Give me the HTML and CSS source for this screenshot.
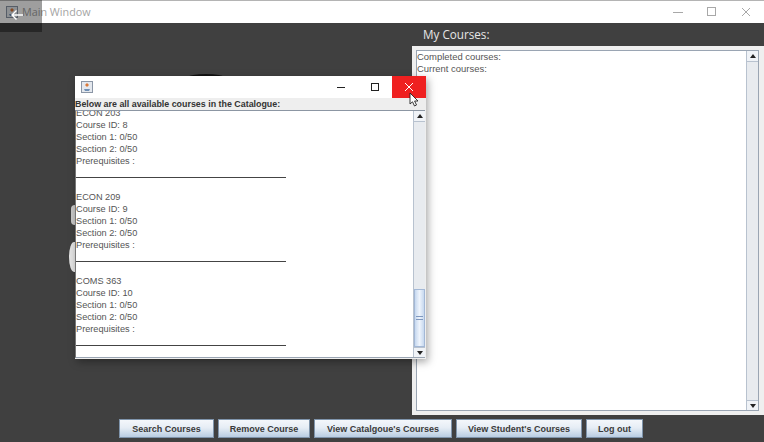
FILE: index.html
```html
<!DOCTYPE html>
<html>
<head>
    <meta charset="UTF-8">
    <title>Main Window</title>
    <link rel="stylesheet" href="styles.css">
</head>
<body>
    <div class="main-window">
        <div class="titlebar">
            <svg class="app-icon" viewBox="0 0 12 12"><rect x="0.5" y="0.5" width="11" height="11" fill="#e4e8ee" stroke="#8b96a6"/><path d="M6 2 L8 4 L6 6 L4 4 Z" fill="#d9793a"/><path d="M3 8 H9 L8 10 H4 Z" fill="#6f8fb5"/></svg>
            <span class="title-text">Main Window</span>
            <div class="win-controls">
                <svg viewBox="0 0 10 10"><path d="M0 5.5 H10" stroke="#a8a8a8"/></svg>
                <svg viewBox="0 0 10 10"><rect x="0.5" y="0.5" width="8" height="8" fill="none" stroke="#a8a8a8"/></svg>
                <svg viewBox="0 0 10 10"><path d="M1 1 L9 9 M9 1 L1 9" stroke="#a8a8a8"/></svg>
            </div>
        </div>
        <div class="content">
            <div class="courses-col">
                <div class="courses-title">My Courses:</div>
                <div class="courses-panel">
                    <div class="courses-box">
                        <div class="courses-text">
                            <div>Completed courses:</div>
                            <div>Current courses:</div>
                        </div>
                        <div class="scrollbar">
                            <div class="arrow-btn"><span class="arrow-up"></span></div>
                            <div class="track"></div>
                            <div class="arrow-btn"><span class="arrow-down"></span></div>
                        </div>
                    </div>
                </div>
            </div>
            <div class="button-row">
                <button class="btn search">Search Courses</button>
                <button class="btn remove">Remove Course</button>
                <button class="btn catalogue">View Catalgoue's Courses</button>
                <button class="btn student">View Student's Courses</button>
                <button class="btn logout">Log out</button>
            </div>
        </div>
    </div>

    <!-- lo que asoma detras del dialogo -->
    <div class="blob blob-top"></div>
    <div class="blob blob-left1"></div>
    <div class="blob blob-left2"></div>

    <div class="dialog">
        <div class="dialog-title">
            <svg class="app-icon" viewBox="0 0 12 12"><rect x="0.5" y="0.5" width="11" height="11" fill="#e4e8ee" stroke="#8b96a6"/><path d="M6 2 L8 4 L6 6 L4 4 Z" fill="#d9793a"/><path d="M3 8 H9 L8 10 H4 Z" fill="#6f8fb5"/></svg>
            <div class="dialog-controls">
                <div class="ctl"><svg viewBox="0 0 10 10"><path d="M1 5.5 H9" stroke="#222"/></svg></div>
                <div class="ctl"><svg viewBox="0 0 10 10"><rect x="1.5" y="1.5" width="7" height="7" fill="none" stroke="#222"/></svg></div>
                <div class="ctl close"><svg viewBox="0 0 10 10"><path d="M1 1 L9 9 M9 1 L1 9" stroke="#fff"/></svg></div>
            </div>
        </div>
        <div class="dialog-label">Below are all available courses in the Catalogue:</div>
        <div class="dialog-body">
            <div class="catalogue-list">
                <div class="course">
                    <div>ECON 203</div>
                    <div>Course ID: 8</div>
                    <div>Section 1: 0/50</div>
                    <div>Section 2: 0/50</div>
                    <div>Prerequisites :</div>
                    <div class="rule"></div>
                </div>
                <div class="course">
                    <div>ECON 209</div>
                    <div>Course ID: 9</div>
                    <div>Section 1: 0/50</div>
                    <div>Section 2: 0/50</div>
                    <div>Prerequisites :</div>
                    <div class="rule"></div>
                </div>
                <div class="course">
                    <div>COMS 363</div>
                    <div>Course ID: 10</div>
                    <div>Section 1: 0/50</div>
                    <div>Section 2: 0/50</div>
                    <div>Prerequisites :</div>
                    <div class="rule"></div>
                </div>
            </div>
            <div class="scrollbar">
                <div class="arrow-btn"><span class="arrow-up"></span></div>
                <div class="track">
                    <div class="thumb"><span class="grip"></span></div>
                </div>
                <div class="arrow-btn"><span class="arrow-down"></span></div>
            </div>
        </div>
    </div>

    <svg class="cursor" viewBox="0 0 11 15"><path d="M1 1 V12 L3.5 9.8 L5.5 14 L7.5 13 L5.6 9 H9 Z" fill="#fff" stroke="#222" stroke-width="0.9"/></svg>

    <div class="back-overlay">
        <svg viewBox="0 0 14 12"><path d="M13 6 H2 M6.5 1.5 L2 6 L6.5 10.5" fill="none" stroke="#fff" stroke-width="1.4"/></svg>
    </div>
</body>
</html>
```

FILE: styles.css
```css
html, body {
    margin: 0;
    height: 100%;
}

body {
    position: relative;
    width: 764px;
    height: 442px;
    overflow: hidden;
    font-family: "Liberation Sans", Arial, sans-serif;
    background-color: #404040;
}

.main-window {
    display: flex;
    flex-direction: column;
    height: 100%;
}

.titlebar {
    display: flex;
    align-items: center;
    height: 22px;
    padding-left: 6px;
    background-color: #fff;
    border-top: 1px solid #b4b4b4;
}

.app-icon {
    width: 12px;
    height: 12px;
    flex-shrink: 0;
}

.title-text {
    margin-left: 4px;
    margin-bottom: 2px;
    font-family: "Open Sans", sans-serif;
    font-size: 10.8px;
    color: #a4a4a4;
}

.win-controls {
    display: flex;
    gap: 24px;
    margin-left: auto;
    margin-right: 13px;
}

.win-controls svg {
    width: 10px;
    height: 10px;
}

.content {
    flex: 1;
    display: flex;
    flex-direction: column;
}

.courses-col {
    margin-left: 412px;
}

.courses-title {
    height: 23px;
    padding-left: 11px;
    line-height: 23px;
    font-family: "Open Sans", sans-serif;
    font-size: 11.7px;
    color: #e6e6e6;
}

.courses-panel {
    height: 369px;
    padding: 4px 5px 4px 4px;
    box-sizing: border-box;
    background-color: #efefef;
}

.courses-box {
    display: flex;
    height: 100%;
    background-color: #fff;
    border: 1px solid #9aa5b3;
    box-sizing: border-box;
}

.courses-text {
    flex: 1;
    font-size: 9.45px;
    line-height: 12px;
    color: #555;
}

.button-row {
    display: flex;
    gap: 4px;
    margin-top: 4px;
    padding-left: 119px;
}

.btn {
    height: 19px;
    padding: 0;
    font-family: "Liberation Sans", Arial, sans-serif;
    font-size: 9px;
    font-weight: bold;
    color: #3a3a3a;
    background: linear-gradient(#f4f7fb, #e6edf5 45%, #b9cde2);
    border: 1px solid #7f94ab;
}

.search { width: 95px; }
.remove { width: 92px; }
.catalogue { width: 138px; }
.student { width: 126px; }
.logout { width: 57px; }

.scrollbar {
    display: flex;
    flex-direction: column;
    width: 11px;
    margin-left: auto;
    flex-shrink: 0;
    background-color: #e8ebef;
    border-left: 1px solid #b8c2cf;
}

.arrow-btn {
    display: flex;
    align-items: center;
    justify-content: center;
    height: 11px;
    background-color: #f0f3f7;
    flex-shrink: 0;
    border-bottom: 1px solid #b8c2cf;
    box-sizing: border-box;
}

.scrollbar .arrow-btn:last-child {
    height: 10px;
    border-bottom: none;
    border-top: 1px solid #b8c2cf;
}

.arrow-up, .arrow-down {
    width: 0;
    height: 0;
    border-left: 3.5px solid transparent;
    border-right: 3.5px solid transparent;
}

.arrow-up {
    border-bottom: 4px solid #222;
}

.arrow-down {
    border-top: 4px solid #222;
}

.track {
    flex: 1;
    display: flex;
    flex-direction: column;
    justify-content: flex-end;
}

.thumb {
    display: flex;
    align-items: center;
    justify-content: center;
    height: 58px;
    box-sizing: border-box;
    background: linear-gradient(90deg, #c6d8ef, #eef4fc 50%, #c6d8ef);
    border: 1px solid #a3b8d6;
}

.grip {
    width: 7px;
    height: 2px;
    border-top: 1px solid #7f98bf;
    border-bottom: 1px solid #7f98bf;
}

.dialog {
    position: absolute;
    left: 75px;
    top: 76px;
    width: 351px;
    height: 283px;
    display: flex;
    flex-direction: column;
    background-color: #eee;
    box-shadow: 2px 3px 8px rgba(0, 0, 0, 0.35);
}

.dialog-title {
    display: flex;
    align-items: center;
    height: 22px;
    flex-shrink: 0;
    padding-left: 6px;
    background-color: #fff;
}

.dialog-controls {
    display: flex;
    margin-left: auto;
    height: 100%;
}

.ctl {
    display: flex;
    align-items: center;
    justify-content: center;
    width: 34px;
}

.ctl svg {
    width: 10px;
    height: 10px;
}

.ctl.close {
    background-color: #ef2020;
}

.dialog-label {
    height: 12px;
    flex-shrink: 0;
    font-size: 8.9px;
    font-weight: bold;
    line-height: 12px;
    color: #333;
}

.dialog-body {
    display: flex;
    height: 248px;
    margin-right: 1px;
    box-sizing: border-box;
    background-color: #fff;
    border-top: 1px solid #8c96a3;
    border-bottom: 1px solid #9aa5b3;
    border-left: 1px solid #777;
    overflow: hidden;
}

.catalogue-list {
    flex: 1;
    margin-top: -4px;
    font-size: 9.2px;
    line-height: 12px;
    color: #555;
}

.course {
    height: 84px;
}

.rule {
    width: 210px;
    height: 10px;
    border-bottom: 1px solid #444;
}

.blob {
    position: absolute;
}

.blob-top {
    left: 188px;
    top: 74px;
    width: 36px;
    height: 6px;
    border-radius: 50% 50% 0 0;
    background-color: #111;
}

.blob-left1 {
    left: 71px;
    top: 205px;
    width: 8px;
    height: 20px;
    border-radius: 4px 0 0 4px;
    background-color: #c8c8c8;
}

.blob-left2 {
    left: 69px;
    top: 242px;
    width: 10px;
    height: 30px;
    border-radius: 50% 0 0 50%;
    background-color: #e4e4e4;
}

.cursor {
    position: absolute;
    left: 409px;
    top: 92px;
    width: 11px;
    height: 15px;
}

.back-overlay {
    position: absolute;
    left: 0;
    top: 0;
    width: 42px;
    height: 32px;
    display: flex;
    align-items: flex-start;
    justify-content: center;
    background-color: rgba(0, 0, 0, 0.38);
}

.back-overlay svg {
    width: 14px;
    height: 12px;
    margin-top: 9px;
    margin-right: 8px;
}
```
